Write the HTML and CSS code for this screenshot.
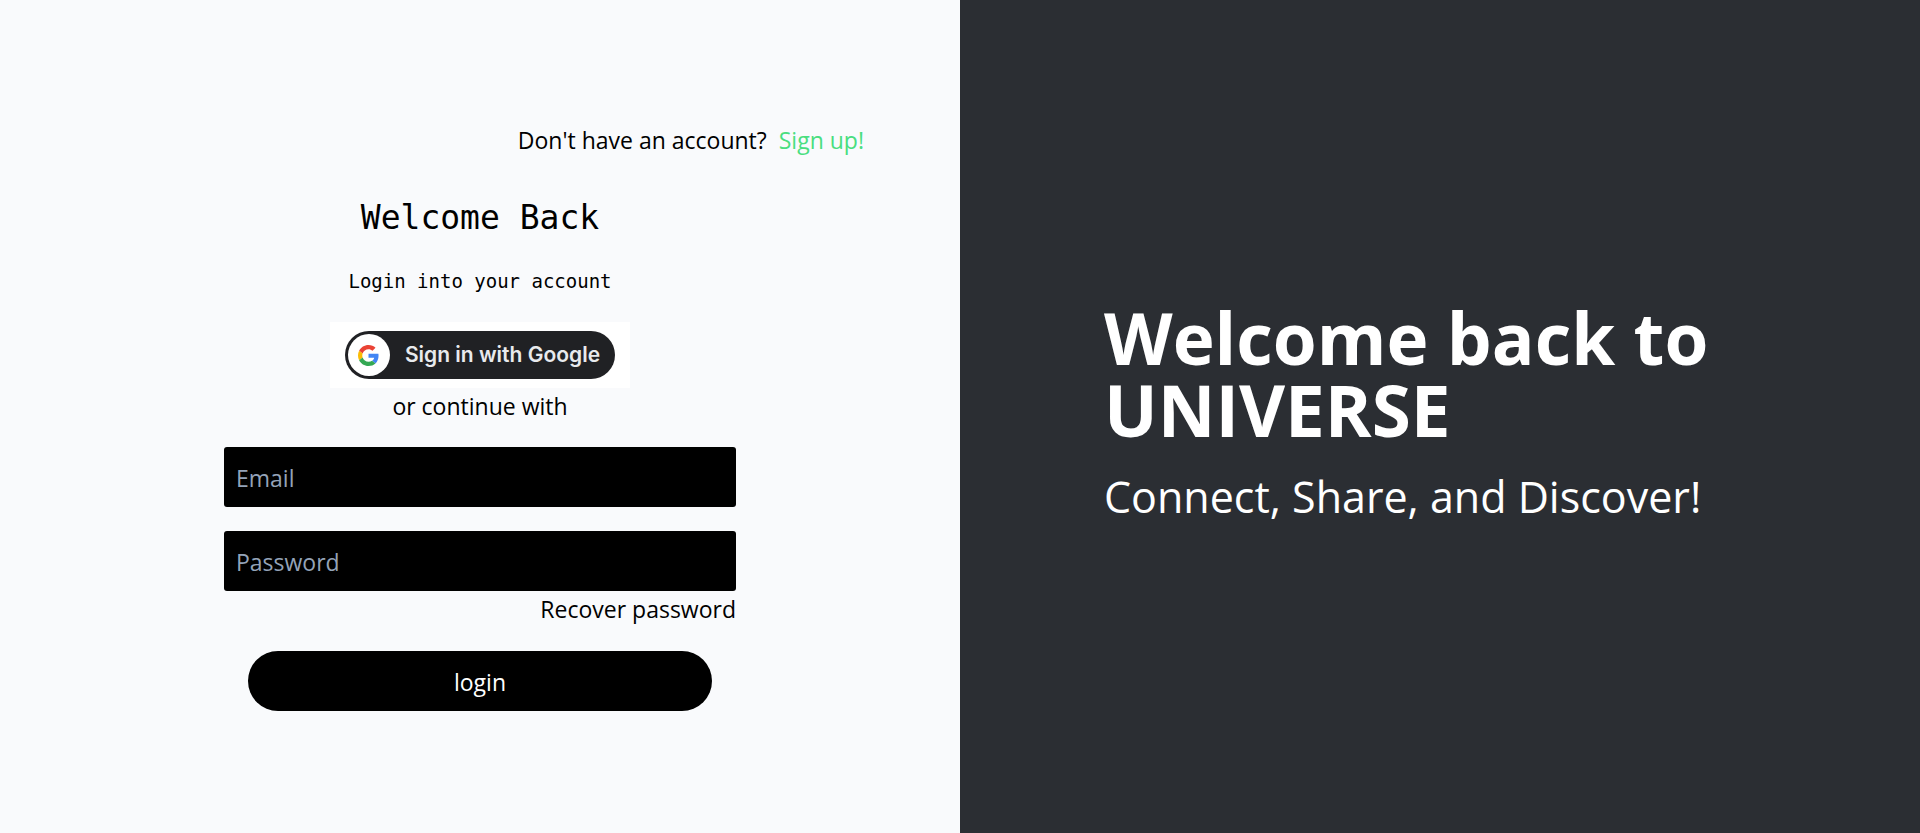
FILE: index.html
```html
<!DOCTYPE html>
<html lang="en">
<head>
<meta charset="utf-8">
<meta name="viewport" content="width=device-width, initial-scale=1">
<title>Login</title>
<link rel="stylesheet" href="styles.css">
</head>
<body>
<main class="page">
  <section class="login">
    <p class="signup">Don't have an account?<a class="signup-link" href="#">Sign up!</a></p>
    <h1 class="title">Welcome Back</h1>
    <p class="subtitle">Login into your account</p>
    <div class="google-frame">
      <button class="google" type="button">
        <span class="google-badge">
          <svg class="google-logo" viewBox="0 0 48 48" aria-hidden="true">
            <path fill="#EA4335" d="M24 9.5c3.54 0 6.71 1.22 9.21 3.6l6.85-6.85C35.9 2.38 30.47 0 24 0 14.62 0 6.51 5.38 2.56 13.22l7.98 6.19C12.43 13.72 17.74 9.5 24 9.5z"/>
            <path fill="#4285F4" d="M46.98 24.55c0-1.57-.15-3.09-.38-4.55H24v9.02h12.94c-.58 2.96-2.26 5.48-4.78 7.18l7.73 6c4.51-4.18 7.09-10.36 7.09-17.65z"/>
            <path fill="#FBBC05" d="M10.53 28.59c-.48-1.45-.76-2.99-.76-4.59s.27-3.14.76-4.59l-7.98-6.19C.92 16.46 0 20.12 0 24c0 3.88.92 7.54 2.56 10.78l7.97-6.19z"/>
            <path fill="#34A853" d="M24 48c6.48 0 11.93-2.13 15.89-5.81l-7.73-6c-2.15 1.45-4.92 2.3-8.16 2.3-6.26 0-11.57-4.22-13.47-9.91l-7.98 6.19C6.51 42.62 14.62 48 24 48z"/>
          </svg>
        </span>
        <span class="google-label">Sign in with Google</span>
      </button>
    </div>
    <p class="divider">or continue with</p>
    <form class="form">
      <input class="field" type="email" placeholder="Email" aria-label="Email">
      <input class="field" type="password" placeholder="Password" aria-label="Password">
      <a class="recover" href="#">Recover password</a>
      <button class="submit" type="submit">login</button>
    </form>
  </section>
  <section class="hero">
    <h2 class="hero-title">Welcome back to UNIVERSE</h2>
    <p class="hero-text">Connect, Share, and Discover!</p>
  </section>
</main>
</body>
</html>
```
FILE: styles.css
```css
* {
  box-sizing: border-box;
  margin: 0;
}

body {
  font-family: "Segoe UI", "Open Sans", sans-serif;
  font-size: 23px;
  line-height: 36px;
  color: #000;
}

a {
  color: inherit;
  text-decoration: none;
}

input,
button {
  font: inherit;
  border: 0;
}

.page {
  display: grid;
  grid-template-columns: 1fr 1fr;
  min-height: 100vh;
}

.login {
  display: flex;
  flex-direction: column;
  align-items: center;
  justify-content: center;
  padding: 0 96px;
  background: #f9fafc;
}

.signup {
  align-self: flex-end;
}

.signup-link {
  margin-left: 12px;
  color: #4ade80;
}

.title,
.subtitle {
  font-family: Consolas, "DejaVu Sans Mono", monospace;
  font-weight: 400;
}

.title {
  margin-top: 36px;
  font-size: 33px;
  line-height: 48px;
}

.subtitle {
  margin: 24px 0 26px;
  font-size: 19px;
  line-height: 30px;
}

.google-frame {
  padding: 9px 15px;
  background: #fff;
}

.google {
  display: flex;
  align-items: center;
  gap: 15px;
  padding: 3px 15px 3px 3px;
  border-radius: 24px;
  background: #202124;
  color: #e8eaed;
  cursor: pointer;
}

.google-badge {
  display: flex;
  align-items: center;
  justify-content: center;
  width: 42px;
  height: 42px;
  border-radius: 50%;
  background: #fff;
}

.google-logo {
  width: 21px;
  height: 21px;
}

.google-label {
  font-family: "Google Sans", Inter, sans-serif;
  font-size: 21px;
  font-weight: 600;
}

.form {
  display: flex;
  flex-direction: column;
  width: 66.67%;
  margin-top: 23px;
}

.field {
  height: 60px;
  padding: 2px 12px 0;
  border-radius: 3px;
  background: #000;
  color: #fff;
}

.field + .field {
  margin-top: 24px;
}

.field::placeholder {
  color: #94a3b8;
}

.recover {
  align-self: flex-end;
}

.submit {
  height: 60px;
  margin: 24px 24px 0;
  padding-top: 2px;
  border-radius: 30px;
  background: #000;
  color: #fff;
  cursor: pointer;
}

.hero {
  display: flex;
  flex-direction: column;
  justify-content: center;
  padding: 0 96px 8px 144px;
  background: #2b2e33;
  color: #fff;
}

.hero-title {
  font-size: 71px;
  line-height: 72px;
  font-weight: 700;
}

.hero-text {
  margin-top: 24px;
  font-size: 43px;
  line-height: 54px;
}
```
